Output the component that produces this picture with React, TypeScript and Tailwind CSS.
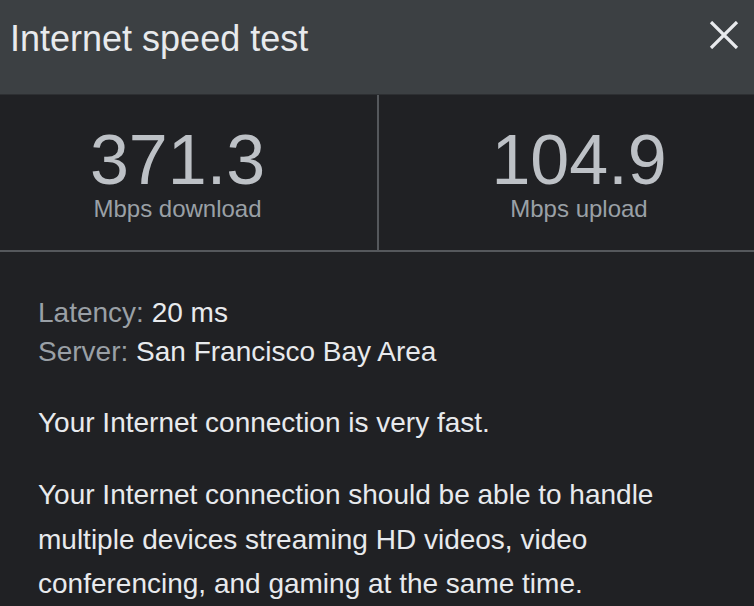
export default function App() {
  const font = { fontFamily: '"Liberation Sans", Arial, sans-serif' }

  return (
    <div className="w-[754px] h-[606px] overflow-hidden bg-[#202124] text-[#e8eaed]" style={font}>
      {/* header */}
      <div className="relative h-[95px] bg-[#3c4043] border-b border-[#2d2f32] pl-[10px] pt-[21px]">
        <h1 className="text-[36px] leading-none text-[#e8eaed]">Internet speed test</h1>
        <button className="absolute left-[709px] top-[21px] w-[30px] h-[28px] flex items-center justify-center">
          <svg width="30" height="28" viewBox="0 0 30 28" fill="none">
            <path d="M2 1l26 26M28 1L2 27" stroke="#e8eaed" strokeWidth="3.2" />
          </svg>
        </button>
      </div>

      {/* results */}
      <div className="flex h-[157px] border-b-2 border-[#55585c]">
        <div className="w-[379px] border-r-2 border-[#55585c] pr-[22px] pt-[30px] flex flex-col items-center">
          <div className="text-[70px] leading-none text-[#bdc1c6]">371.3</div>
          <div className="mt-[2px] text-[24px] leading-none text-[#9aa0a6]">Mbps download</div>
        </div>
        <div className="flex-1 pl-[25px] pt-[30px] flex flex-col items-center">
          <div className="text-[70px] leading-none text-[#bdc1c6]">104.9</div>
          <div className="mt-[2px] text-[24px] leading-none text-[#9aa0a6]">Mbps upload</div>
        </div>
      </div>

      {/* details */}
      <div className="pl-[38px] pr-6 pt-[41px] text-[28px]">
        <div className="leading-[39px]">
          <p>
            <span className="text-[#9aa0a6]">Latency: </span>20 ms
          </p>
          <p>
            <span className="text-[#9aa0a6]">Server: </span>San Francisco Bay Area
          </p>
        </div>
        <p className="mt-[30px] leading-[44px]">Your Internet connection is very fast.</p>
        <p className="mt-7 leading-[44.5px]">
          Your Internet connection should be able to handle multiple devices streaming HD videos, video
          conferencing, and gaming at the same time.
        </p>
      </div>
    </div>
  )
}
